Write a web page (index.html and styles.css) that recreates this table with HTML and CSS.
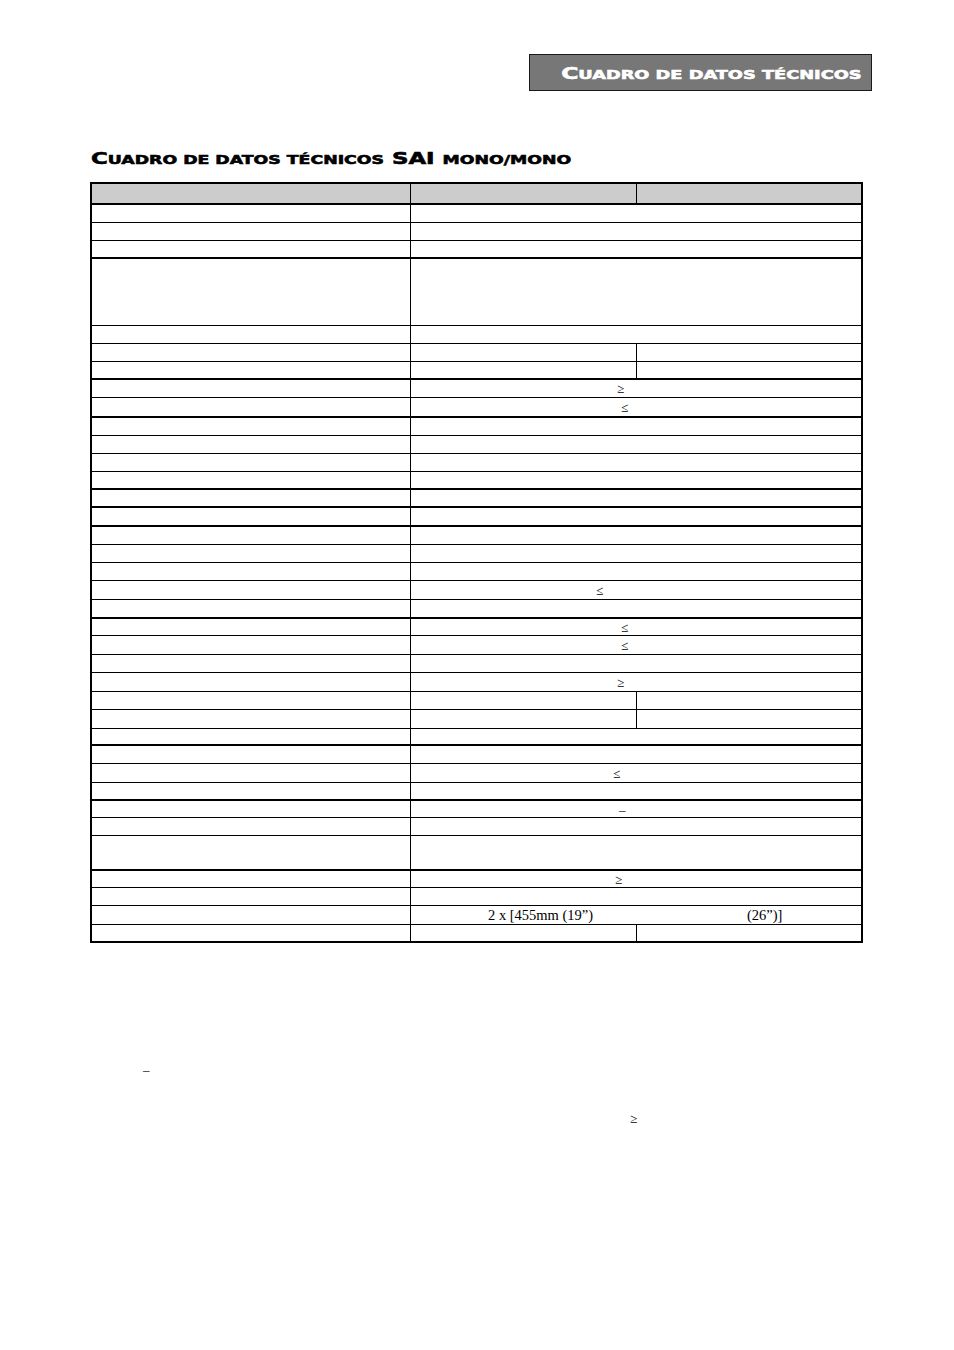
FILE: index.html
```html
<!DOCTYPE html>
<html lang="es">
<head>
<meta charset="utf-8">
<title>Cuadro de datos técnicos</title>
<link rel="stylesheet" href="styles.css">
</head>
<body>
<header class="tab-wrap">
  <div class="tab"><span class="sc sc-right"><span class="big">C</span><span class="sm">uadro de datos técnicos</span></span></div>
</header>

<h1 class="heading"><span class="sc sc-left"><span class="big">C</span><span class="sm">uadro de datos técnicos</span> <span class="big">SAI</span> <span class="sm">mono/mono</span></span></h1>

<div class="table">
  <div class="row split head h21 thick"><div class="cell"></div><div class="cell"></div><div class="cell"></div></div>
  <div class="row h19 thick"><div class="cell"></div><div class="cell"></div></div>
  <div class="row h18"><div class="cell"></div><div class="cell"></div></div>
  <div class="row h17"><div class="cell"></div><div class="cell"></div></div>
  <div class="row h68 thick"><div class="cell"></div><div class="cell"></div></div>
  <div class="row h18"><div class="cell"></div><div class="cell"></div></div>
  <div class="row split h18"><div class="cell"></div><div class="cell"></div><div class="cell"></div></div>
  <div class="row split h17"><div class="cell"></div><div class="cell"></div><div class="cell"></div></div>
  <div class="row h19 thick"><div class="cell"></div><div class="cell sym p206">≥</div></div>
  <div class="row h19"><div class="cell"></div><div class="cell sym p210">≤</div></div>
  <div class="row h19 thick"><div class="cell"></div><div class="cell"></div></div>
  <div class="row h18"><div class="cell"></div><div class="cell"></div></div>
  <div class="row h18"><div class="cell"></div><div class="cell"></div></div>
  <div class="row h17"><div class="cell"></div><div class="cell"></div></div>
  <div class="row h18 thick"><div class="cell"></div><div class="cell"></div></div>
  <div class="row h19 thick"><div class="cell"></div><div class="cell"></div></div>
  <div class="row h19 thick"><div class="cell"></div><div class="cell"></div></div>
  <div class="row h18"><div class="cell"></div><div class="cell"></div></div>
  <div class="row h18"><div class="cell"></div><div class="cell"></div></div>
  <div class="row h19"><div class="cell"></div><div class="cell sym p185">≤</div></div>
  <div class="row h18"><div class="cell"></div><div class="cell"></div></div>
  <div class="row h18 thick"><div class="cell"></div><div class="cell sym p210">≤</div></div>
  <div class="row h19"><div class="cell"></div><div class="cell sym p210">≤</div></div>
  <div class="row h18"><div class="cell"></div><div class="cell"></div></div>
  <div class="row h19"><div class="cell"></div><div class="cell sym p206">≥</div></div>
  <div class="row split h18"><div class="cell"></div><div class="cell"></div><div class="cell"></div></div>
  <div class="row split h19"><div class="cell"></div><div class="cell"></div><div class="cell"></div></div>
  <div class="row h16"><div class="cell"></div><div class="cell"></div></div>
  <div class="row h19 thick"><div class="cell"></div><div class="cell"></div></div>
  <div class="row h19"><div class="cell"></div><div class="cell sym p202">≤</div></div>
  <div class="row h17"><div class="cell"></div><div class="cell"></div></div>
  <div class="row h18 thick"><div class="cell"></div><div class="cell sym p208">–</div></div>
  <div class="row h18"><div class="cell"></div><div class="cell"></div></div>
  <div class="row h34"><div class="cell"></div><div class="cell"></div></div>
  <div class="row h18 thick"><div class="cell"></div><div class="cell sym p204">≥</div></div>
  <div class="row h18"><div class="cell"></div><div class="cell"></div></div>
  <div class="row h19"><div class="cell"></div><div class="cell dim"><span class="dim-a">2 x [455mm (19”)</span><span class="dim-b">(26”)]</span></div></div>
  <div class="row split h19 last"><div class="cell"></div><div class="cell"></div><div class="cell"></div></div>
</div>

<section class="notes">
  <p class="note note-dash">–</p>
  <p class="note note-ge">≥</p>
</section>
</body>
</html>
```

FILE: styles.css
```css
html, body {
  margin: 0;
  padding: 0;
  background: #ffffff;
}

body {
  width: 954px;
  min-height: 1350px;
  font-family: "Liberation Serif", "Times New Roman", serif;
  color: #000;
}

/* Top-right section tab */
.tab-wrap {
  padding: 54px 0 0 529px;
}

.tab {
  box-sizing: border-box;
  width: 343px;
  height: 37px;
  border: 1px solid #1a1a1a;
  background: #777777;
  text-align: right;
  padding: 9px 9px 0 0;
}

/* Copperplate-like wide small caps */
.sc {
  display: inline-block;
  font-family: "DejaVu Sans", "Liberation Sans", sans-serif;
  font-weight: bold;
  line-height: 20px;
  white-space: nowrap;
  -webkit-text-stroke: 0.6px currentColor;
}

.sc-right {
  color: #ffffff;
  transform: scaleX(1.42);
  transform-origin: right center;
}

.sc-left {
  color: #000000;
  transform: scaleX(1.385);
  transform-origin: left center;
}

.big {
  font-size: 16.5px;
}

.sm {
  font-size: 12.5px;
  text-transform: uppercase;
}

/* Section heading */
.heading {
  margin: 58px 0 13px 91px;
  padding: 0;
  font-size: 16.5px;
  line-height: 20px;
  height: 20px;
  font-weight: bold;
}

/* Data table */
.table {
  box-sizing: border-box;
  width: 773px;
  margin-left: 90px;
  border-left: 2px solid #000;
  border-right: 2px solid #000;
}

.row {
  box-sizing: border-box;
  display: grid;
  grid-template-columns: 318px 1fr;
  border-top: 1px solid #000;
}

.row.split {
  grid-template-columns: 318px 226px 1fr;
}

.row.thick {
  border-top-width: 2px;
}

.row.last {
  border-bottom: 2px solid #000;
}

.row.head {
  background: #cccccc;
}

.cell {
  box-sizing: border-box;
  min-width: 0;
}

.cell + .cell {
  border-left: 1px solid #000;
}

.h16 { height: 16px; }
.h17 { height: 17px; }
.h18 { height: 18px; }
.h19 { height: 19px; }
.h21 { height: 21px; }
.h34 { height: 34px; }
.h68 { height: 68px; }

.sym {
  display: flex;
  align-items: center;
  font-family: "Liberation Serif", "Times New Roman", serif;
  font-size: 13px;
  line-height: 1;
}

.p185 { padding-left: 185px; }
.p202 { padding-left: 202px; }
.p204 { padding-left: 204px; }
.p206 { padding-left: 206px; }
.p208 { padding-left: 208px; }
.p210 { padding-left: 210px; }

.dim {
  display: flex;
  align-items: center;
  padding-left: 77px;
  font-family: "Liberation Serif", "Times New Roman", serif;
  font-size: 14.5px;
  line-height: 1;
  white-space: nowrap;
}

.dim-a {
  width: 259px;
}

/* Loose glyphs below the table */
.notes {
  padding-top: 119px;
}

.note {
  margin: 0;
  font-family: "Liberation Serif", "Times New Roman", serif;
  font-size: 13px;
  line-height: 16px;
  height: 16px;
}

.note-dash {
  padding-left: 143px;
}

.note-ge {
  margin-top: 33px;
  padding-left: 630px;
}
```
